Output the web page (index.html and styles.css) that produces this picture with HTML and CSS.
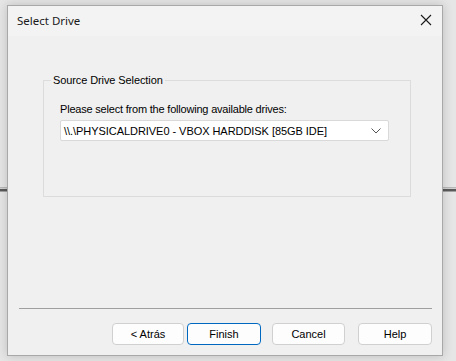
FILE: index.html
```html
<!DOCTYPE html>
<html>
<head>
<meta charset="utf-8">
<link rel="stylesheet" href="styles.css">
</head>
<body>
<div class="bgline bgline-left"></div>
<div class="bgline bgline-right"></div>
<div class="window">
  <div class="titlebar">
    <span class="title">Select Drive</span>
    <svg class="close" width="12" height="12" viewBox="0 0 12 12"><path d="M1 1 L11 11 M11 1 L1 11" stroke="#1a1a1a" stroke-width="1.1" fill="none"/></svg>
  </div>
  <div class="content">
    <fieldset class="group">
      <legend class="legend">Source Drive Selection</legend>
      <div class="prompt">Please select from the following available drives:</div>
      <div class="combo">
        <span class="combo-text">\\.\PHYSICALDRIVE0 - VBOX HARDDISK [85GB IDE]</span>
        <svg class="chev" width="10" height="6" viewBox="0 0 10 6"><path d="M0.5 0.5 L5 5 L9.5 0.5" stroke="#555" stroke-width="1" fill="none"/></svg>
      </div>
    </fieldset>
    <div class="spacer"></div>
    <div class="separator"></div>
    <div class="buttons">
      <button class="btn btn-back">&lt; Atrás</button>
      <button class="btn btn-finish">Finish</button>
      <button class="btn btn-cancel">Cancel</button>
      <button class="btn btn-help">Help</button>
    </div>
  </div>
</div>
</body>
</html>
```
FILE: styles.css
```css
html, body {
  margin: 0;
  padding: 0;
}
body {
  width: 456px;
  height: 361px;
  background: #e6e6e6;
  position: relative;
  overflow: hidden;
  font-family: "Liberation Sans", Arial, sans-serif;
}
.bgline {
  position: absolute;
  top: 187px;
  height: 5px;
  background: linear-gradient(#b8b8b8 0, #b8b8b8 1px, #d0d0d0 1px, #d0d0d0 2px, #5a5a5a 2px, #5a5a5a 4px, #a0a0a0 4px);
}
.bgline-left { left: 0; width: 8px; }
.bgline-right { left: 443px; width: 13px; }
.window {
  position: absolute;
  left: 7px;
  top: 5px;
  width: 434px;
  height: 349px;
  border: 1px solid #a8a8a8;
  background: #f0f0f0;
  box-shadow: 0 0 10px rgba(0,0,0,0.18);
  display: flex;
  flex-direction: column;
}
.titlebar {
  height: 30px;
  background: #f3f3f3;
  display: flex;
  align-items: center;
  justify-content: space-between;
  padding: 0 10px 0 9px;
}
.title {
  font-family: "Noto Sans", "Open Sans", sans-serif;
  font-size: 11.5px;
  color: #1a1a1a;
  margin-top: -1px;
}
.close {
  margin-right: 0;
  margin-top: -2px;
}
.content {
  flex: 1;
  display: flex;
  flex-direction: column;
}
.group {
  margin: 38px 0 0 35px;
  width: 368px;
  height: 123px;
  box-sizing: border-box;
  border: 1px solid #dcdcdc;
  padding: 0 0 0 16px;
  font-size: 11px;
  color: #000;
}
.legend {
  padding: 0 2px;
  margin-left: -9px;
  font-size: 11px;
  letter-spacing: -0.1px;
}
.prompt {
  margin-top: 16px;
  height: 14px;
  line-height: 14px;
  letter-spacing: -0.2px;
}
.combo {
  margin-top: 4px;
  width: 329px;
  height: 21px;
  box-sizing: border-box;
  background: #fff;
  border: 1px solid #d9d9d9;
  border-radius: 2px;
  display: flex;
  align-items: center;
  justify-content: space-between;
  padding: 0 7px 0 3px;
}
.combo-text {
  font-size: 11px;
  letter-spacing: -0.05px;
}
.spacer {
  flex: 1;
}
.separator {
  margin: 0 10px 0 11px;
  height: 1px;
  background: #a0a0a0;
}
.buttons {
  display: flex;
  justify-content: flex-end;
  padding: 14px 10px 10px 0;
  gap: 0;
}
.btn {
  height: 22px;
  width: 72px;
  box-sizing: border-box;
  background: #fdfdfd;
  border: 1px solid #d0d0d0;
  border-radius: 4px;
  font-family: "Liberation Sans", Arial, sans-serif;
  font-size: 11px;
  color: #000;
  padding: 0;
}
.btn-back { width: 72px; margin-right: 3px; }
.btn-finish { width: 74px; border-color: #0067c0; margin-right: 11px; }
.btn-cancel { width: 73px; margin-right: 13px; }
.btn-help { width: 74px; }
```
